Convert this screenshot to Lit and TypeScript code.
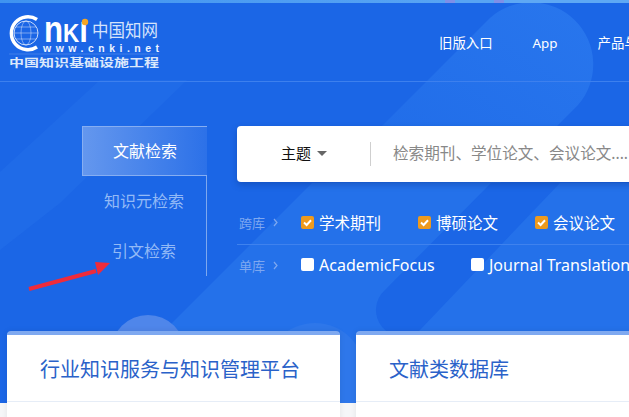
import { LitElement, html, css, svg } from "lit";
import { customElement } from "lit/decorators.js";

@customElement("app-root")
export class AppRoot extends LitElement {
  static styles = css`
    :host {
      display: block;
      width: 629px;
      height: 417px;
      overflow: hidden;
      position: relative;
      background: #f5f6f8;
      font-family: "Noto Sans", "Noto Sans CJK SC", sans-serif;
    }
    .hero {
      position: relative;
      height: 403px;
      background: #1b66e6;
      border-top: 3px solid;
      border-image: linear-gradient(to right, #3f93f0 0, #58a4f3 445px, #7f8fe8 445px, #7f8fe8 455px, #58a4f3 455px, #58a4f3 493px, #7f8fe8 493px, #7f8fe8 503px, #5ea8f4 503px) 1;
      box-sizing: border-box;
    }
    .decor {
      position: absolute;
      left: 0;
      top: 0;
      width: 629px;
      height: 400px;
    }
    .content {
      position: relative;
      display: flex;
      flex-direction: column;
    }
    header {
      height: 78px;
      border-bottom: 1px solid #3d80ee;
      display: flex;
      align-items: flex-start;
      overflow: hidden;
    }
    .logo {
      flex: none;
      width: 170px;
      height: 78px;
    }
    nav {
      display: flex;
      margin: 31px 0 0 269px;
      gap: 40px;
      color: #fff;
      font-size: 13.4px;
      line-height: 18px;
      white-space: nowrap;
    }
    .main {
      display: flex;
      margin: 44px 0 0 82px;
    }
    .tabs {
      flex: none;
      width: 125px;
      box-sizing: border-box;
      height: 150px;
      font-size: 16px;
      color: #93baf6;
      display: flex;
      flex-direction: column;
      border-right: 1px solid #7ea8ee;
    }
    .tab {
      height: 50px;
      box-sizing: border-box;
      padding-bottom: 2px;
      display: flex;
      align-items: center;
      justify-content: center;
    }
    .tab.on {
      margin-right: -1px;
      color: #fff;
      border: 1px solid #86aef2;
      border-right: 0;
      background: linear-gradient(to right, #6497ee, #2c71e8);
    }
    .right {
      width: 392px;
      margin-left: 30px;
      flex: none;
    }
    .search {
      width: 420px;
      height: 56px;
      background: #fff;
      border-radius: 4px 0 0 4px;
      box-shadow: 0 3px 6px rgba(13, 60, 150, 0.45);
      display: flex;
      align-items: center;
      white-space: nowrap;
      overflow: hidden;
    }
    .field {
      width: 134px;
      box-sizing: border-box;
      padding: 0 0 3px 44px;
      border-right: 1px solid #cfcfcf;
      height: 24px;
      display: flex;
      align-items: center;
      font-size: 15px;
      color: #111;
      gap: 6px;
    }
    .caret {
      width: 0;
      height: 0;
      margin-top: 2px;
      border-left: 5px solid transparent;
      border-right: 5px solid transparent;
      border-top: 5px solid #666;
    }
    .ph {
      padding: 0 0 3px 22px;
      font-size: 15.6px;
      color: #888;
    }
    .row {
      display: flex;
      align-items: center;
      height: 41px;
      white-space: nowrap;
    }
    .row.first {
      margin-top: 21px;
      border-bottom: 1px solid #3f82ee;
    }
    .row.second {
      height: 42px;
    }
    .label {
      width: 64px;
      padding: 0 0 2px 2px;
      box-sizing: border-box;
      flex: none;
      color: #7ea8f0;
      font-size: 13px;
      display: flex;
      align-items: center;
      gap: 6px;
    }
    .chev {
      width: 9px;
      height: 9px;
    }
    .opt {
      display: flex;
      align-items: center;
      gap: 5px;
      color: #fff;
      font-size: 15.5px;
      flex: none;
      padding-bottom: 3px;
    }
    .box {
      width: 13px;
      height: 13px;
      border-radius: 2px;
      background: #fff;
      flex: none;
      display: block;
    }
    .box.checked {
      background: #ee9a1d;
    }
    .first .opt {
      width: 117px;
    }
    .second .opt {
      width: 170px;
      font-size: 16px;
    }
    .cards {
      display: grid;
      grid-template-columns: 333px 333px;
      gap: 16px;
      margin: 44px 0 0 7px;
    }
    .card {
      background: #fff;
      border-top: 4px solid #7fa9f0;
      border-radius: 4px 4px 0 0;
      height: 120px;
      box-sizing: border-box;
      box-shadow: 0 0 6px rgba(0, 0, 0, 0.08);
    }
    .card h2 {
      margin: 0;
      font-weight: 400;
      font-size: 20px;
      line-height: 28px;
      color: #2a62c9;
      padding: 21px 33px 17px;
      border-bottom: 1px solid #e6edf7;
    }
    .arrow {
      position: absolute;
      left: 24px;
      top: 252px;
      width: 90px;
      height: 40px;
    }
  `;

  private check() {
    return html`<svg class="box checked" viewBox="0 0 13 13"><path d="M3 6.6 5.6 9 10 4.2" fill="none" stroke="#fff" stroke-width="2"/></svg>`;
  }

  private chevron() {
    return html`<svg class="chev" viewBox="0 0 9 9"><path d="M3 1l3 3.5L3 8" fill="none" stroke="#7ea8f0" stroke-width="1.2"/></svg>`;
  }

  private decor() {
    return svg`
      <defs>
        <linearGradient id="b1" x1="0" y1="1" x2="1" y2="0">
          <stop offset="0" stop-color="#1f6be8"/><stop offset="1" stop-color="#2a78ee"/>
        </linearGradient>
      </defs>
      <g transform="translate(0 -3)">
        <rect width="629" height="403" fill="#1b66e6"/>
        <path d="M0 172 L100 80 L187 80 L60 203 L0 250 Z" fill="#2470ea" opacity=".5"/>
        <path d="M150 345 L312 183 L629 183 L629 403 L150 403 Z" fill="#2471ea"/>
        <path d="M408 100 L490 18 A62 62 0 0 1 578 105 L500 183 L325 183 Z" fill="url(#b1)" opacity=".9"/>
        <path d="M385 290 L491 183 L560 183 L420 330 A25 25 0 0 1 385 290 Z" fill="#1b66e6"/>
        <circle cx="148" cy="352" r="37" fill="#4f86ea"/>
        <circle cx="315" cy="373" r="50" fill="#2e77ea"/>
      </g>
    `;
  }

  render() {
    return html`
      <div class="hero">
        <svg class="decor" viewBox="0 0 629 400">${this.decor()}</svg>
        <div class="content">
          <header>
            <svg class="logo" viewBox="0 0 170 78">
              <g fill="none" stroke="#fff">
                <path d="M37 16.500A16.500 16.500 0 1 0 37 44" stroke-width="3.500"/>
                <circle cx="26" cy="30" r="12" stroke-width="1" opacity=".75"/>
                <ellipse cx="26" cy="30" rx="5" ry="12" stroke-width=".7" opacity=".6"/>
                <path d="M14 30H38M16 24H36M16 36H36" stroke-width=".7" opacity=".6"/>
              </g>
              <text x="44" y="39" font-family="Liberation Sans" font-weight="700" fill="#fff" textLength="44" lengthAdjust="spacingAndGlyphs"><tspan font-size="36">n</tspan><tspan font-size="26">K</tspan><tspan font-size="36">ı</tspan></text>
              <circle cx="85" cy="19" r="3.200" fill="#f6a623"/>
              <text x="92" y="34" font-family="Noto Sans CJK SC" font-size="18" fill="#d5e3fb" textLength="66" lengthAdjust="spacingAndGlyphs">中国知网</text>
              <text x="43" y="49" font-family="Liberation Sans" font-weight="700" font-size="10.500" fill="#eef4ff" textLength="116">www.cnki.net</text>
              <path d="M9 51H159" stroke="#5d92ee" stroke-width=".6"/>
              <text x="9" y="64" font-family="Noto Sans CJK SC" font-weight="700" font-size="11" fill="#dce8fb" textLength="150" lengthAdjust="spacingAndGlyphs">中国知识基础设施工程</text>
            </svg>
            <nav><span>旧版入口</span><span>App</span><span>产品与服务</span></nav>
          </header>
          <div class="main">
            <div class="tabs">
              <div class="tab on">文献检索</div>
              <div class="tab">知识元检索</div>
              <div class="tab">引文检索</div>
            </div>
            <div class="right">
              <div class="search">
                <div class="field">主题<span class="caret"></span></div>
                <div class="ph">检索期刊、学位论文、会议论文....</div>
              </div>
              <div class="row first">
                <div class="label">跨库${this.chevron()}</div>
                <div class="opt">${this.check()}学术期刊</div>
                <div class="opt">${this.check()}博硕论文</div>
                <div class="opt">${this.check()}会议论文</div>
              </div>
              <div class="row second">
                <div class="label">单库${this.chevron()}</div>
                <div class="opt"><span class="box"></span>AcademicFocus</div>
                <div class="opt"><span class="box"></span>Journal Translation</div>
              </div>
            </div>
          </div>
          <div class="cards">
            <div class="card"><h2>行业知识服务与知识管理平台</h2></div>
            <div class="card"><h2>文献类数据库</h2></div>
          </div>
        </div>
        <svg class="arrow" viewBox="0 0 90 40">
          <path d="M5 34 72 16" stroke="#ef2b3b" stroke-width="4" fill="none"/>
          <path d="M86 8 71 7 74 20Z" fill="#ef2b3b"/>
        </svg>
      </div>
    `;
  }
}
